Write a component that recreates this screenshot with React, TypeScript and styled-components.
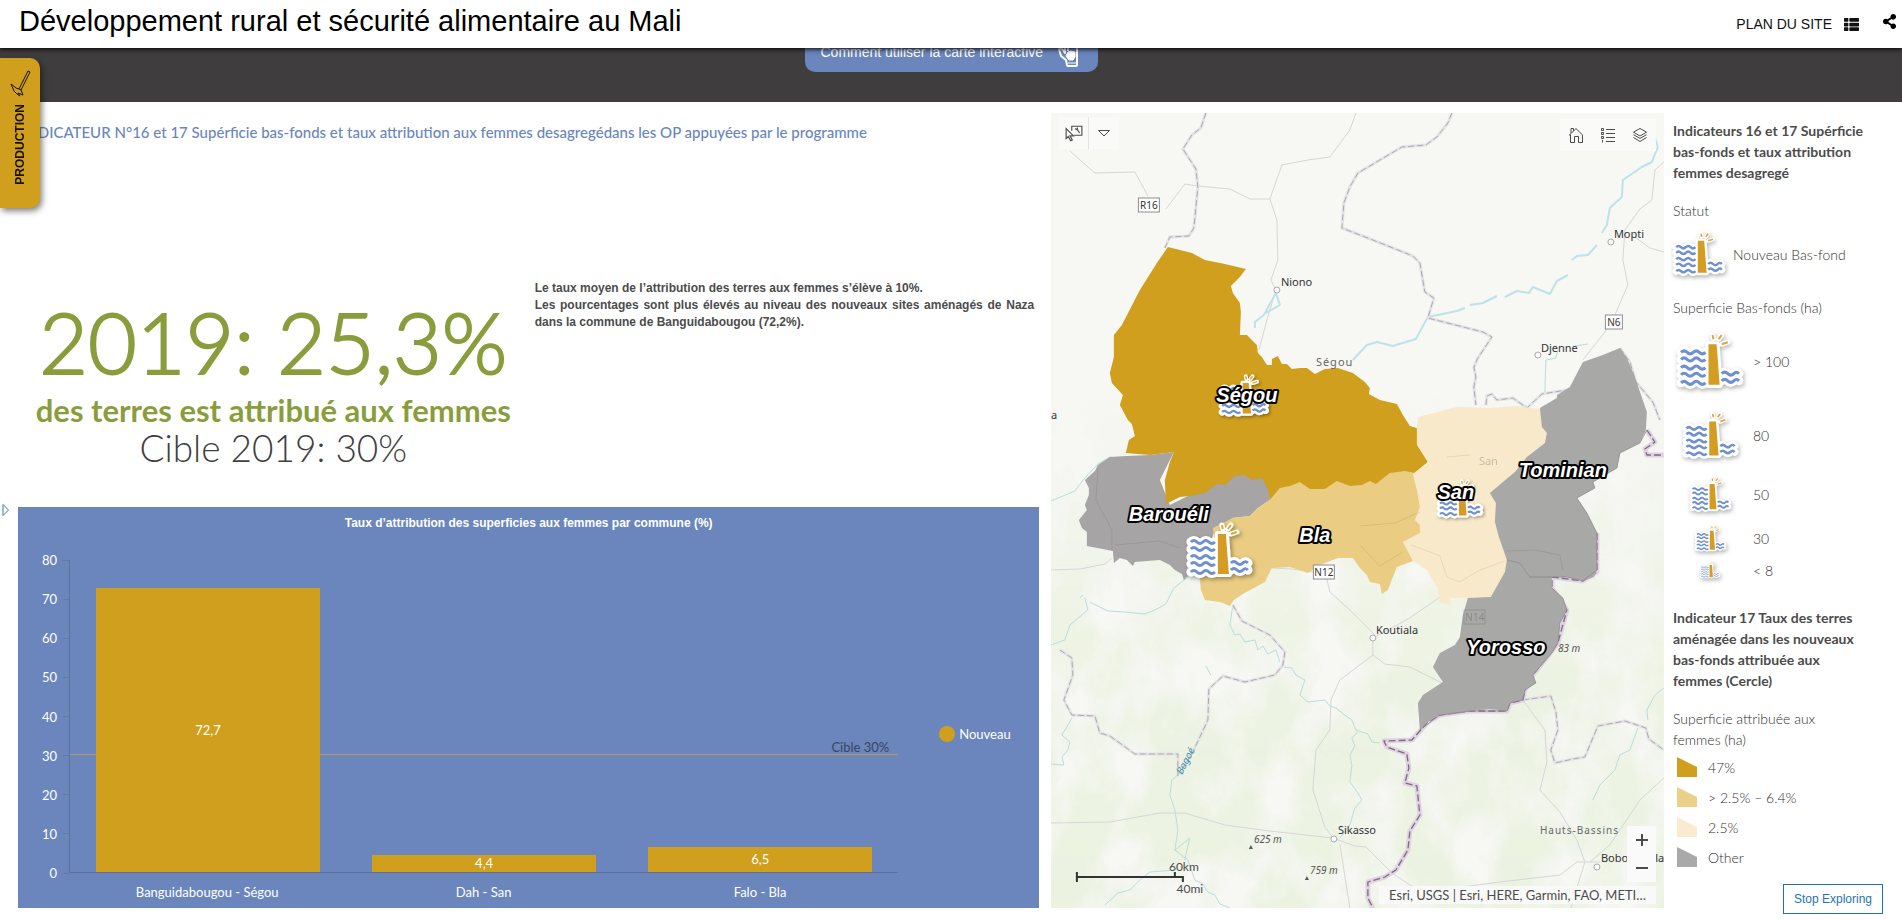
import React from 'react';
import styled, { createGlobalStyle } from 'styled-components';
import { FaThList, FaShareAlt } from 'react-icons/fa';

const GOLD = '#cf9f1d';
const BLUE = '#6a86bc';

const GlobalStyle = createGlobalStyle`
  *, *::before, *::after { box-sizing: border-box; }
  body { margin: 0; background: #fff; color: #4c4c4c; font-family: Lato, "Open Sans", sans-serif; font-size: 14px; }
  h1, h2, h3, p, ul, figure { margin: 0; padding: 0; }
  ul { list-style: none; }
  button { font: inherit; color: inherit; border: 0; padding: 0; background: none; cursor: pointer; }
`;

const Page = styled.div`
  display: flex;
  flex-direction: column;
  min-height: 100vh;
`;

const Header = styled.header`
  position: relative;
  z-index: 3;
  display: flex;
  align-items: center;
  height: 48px;
  padding: 0 5px 6px 19px;
  background: #fff;
  color: #000;
  font-family: "Liberation Sans", Arial, sans-serif;
  box-shadow: 0 1px 5px #000;
`;

const SiteTitle = styled.h1`
  flex: 1;
  font-size: 29px;
  font-weight: 400;
  line-height: 40px;
`;

const SiteMapLink = styled.a`
  display: flex;
  align-items: center;
  gap: 12px;
  margin: 6px 22px 0 0;
  color: #111;
  font-size: 14px;
  text-decoration: none;
`;

const IconButton = styled.button`
  display: grid;
  place-items: center;
  width: 16px;
  height: 32px;
`;

const Band = styled.div`
  display: flex;
  flex-direction: column;
  align-items: center;
  justify-content: flex-end;
  height: 54px;
  padding-bottom: 30px;
  overflow: hidden;
  background: #3f3d3d;
`;

const HelpLink = styled.a`
  display: flex;
  flex: none;
  align-items: center;
  justify-content: space-between;
  width: 293px;
  height: 40px;
  padding: 0 17px 0 16px;
  border-radius: 10px;
  background: ${BLUE};
  color: #fff;
  font: 14px "Liberation Sans", Arial, sans-serif;
  text-decoration: none;
`;

const SectionTab = styled.button`
  position: absolute;
  z-index: 4;
  top: 58px;
  left: 0;
  display: flex;
  flex-direction: column;
  align-items: center;
  gap: 7px;
  width: 40px;
  height: 150px;
  padding-top: 12px;
  border-radius: 0 10px 10px 0;
  background: ${GOLD};
  color: #1a0f00;
  box-shadow: 2px 3px 6px rgba(0, 0, 0, 0.5);
  font: bold 12px "Liberation Sans", Arial, sans-serif;
`;

const TabText = styled.span`
  writing-mode: vertical-rl;
  transform: rotate(180deg);
`;

const Main = styled.main`
  flex: 1;
  display: grid;
  grid-template-columns: minmax(0, 5fr) 12px minmax(0, 3fr) 238px;
  padding: 11px 0 11px 18px;
`;

const Story = styled.section`
  position: relative;
  display: grid;
  grid-template-rows: minmax(394px, auto) 1fr;
`;

const Intro = styled.div`
  display: flex;
  flex-direction: column;
`;

const IndicatorTitle = styled.h2`
  padding: 9px 0 0 4px;
  color: ${BLUE};
  font-size: 15px;
  font-weight: 500;
  line-height: 20px;
`;

const Facts = styled.div`
  display: grid;
  grid-template-columns: 1fr 1fr;
  padding-top: 138px;
`;

const Figures = styled.div`
  display: flex;
  flex-direction: column;
  align-items: center;
  padding-top: 12px;
`;

const BigFigure = styled.p`
  color: #8a9d3c;
  font-size: 84px;
  font-weight: 300;
  line-height: 100px;
  -webkit-text-stroke: 2px #8a9d3c;
`;

const FigureCaption = styled.p`
  color: #8a9d3c;
  font-size: 31px;
  font-weight: 700;
  line-height: 36px;
`;

const Target = styled.p`
  color: #404040;
  font-size: 37px;
  font-weight: 300;
  line-height: 40px;
`;

const Comment = styled.div`
  padding: 0 5px 0 6px;
  font: bold 12px/17px "Liberation Sans", Arial, sans-serif;
  text-align: justify;
`;

const ExpandButton = styled.button`
  position: absolute;
  top: 390px;
  left: -16px;
  line-height: 0;
`;

const ChartPanel = styled.figure`
  display: flex;
  flex-direction: column;
  background: ${BLUE};
  color: #fff;
  font-size: 13px;
`;

const ChartTitle = styled.figcaption`
  padding-top: 8px;
  font: bold 12px/16px "Liberation Sans", Arial, sans-serif;
  text-align: center;
`;

const ChartBody = styled.div`
  flex: 1;
  display: grid;
  grid-template-columns: 51px 1fr 141px;
  grid-template-rows: 1fr 35px;
  padding-top: 29px;
`;

const YAxis = styled.ul`
  display: flex;
  flex-direction: column;
  justify-content: space-between;
`;

const Tick = styled.li`
  display: flex;
  align-items: center;
  justify-content: flex-end;
  gap: 6px;
  height: 0;
  &::after {
    content: '';
    width: 6px;
    height: 1px;
    background: #6079a8;
  }
`;

const Plot = styled.div`
  position: relative;
  display: grid;
  grid-template-columns: repeat(3, 1fr);
  align-items: end;
  border: solid #5a71a0;
  border-width: 0 0 1px 1px;
`;

const Bar = styled.div`
  position: relative;
  display: grid;
  place-items: center;
  width: 81%;
  margin: 0 auto;
  background: ${GOLD};
`;

const Guide = styled.div`
  position: absolute;
  right: 0;
  bottom: 37.5%;
  left: 0;
  padding-right: 9px;
  border-bottom: 1px solid #b3995a;
  color: #3a4560;
  line-height: 14px;
  text-align: right;
`;

const Categories = styled.ul`
  grid-column: 2;
  display: grid;
  grid-template-columns: repeat(3, 1fr);
  padding-top: 11px;
  line-height: 16px;
  text-align: center;
`;

const SeriesLegend = styled.div`
  display: flex;
  align-items: center;
  gap: 4px;
  padding: 34px 0 0 41px;
`;

const Dot = styled.span`
  width: 16px;
  height: 16px;
  border-radius: 50%;
  background: ${GOLD};
`;

const MapBox = styled.section`
  position: relative;
  grid-column: 3;
  overflow: hidden;
  min-height: 480px;
  background: #f6f6f2;
`;

const MapCanvas = styled.svg`
  position: absolute;
  inset: 0;
  width: 100%;
  height: 100%;
`;

const MapTools = styled.div<{ $side: 'left' | 'right' }>`
  position: absolute;
  top: ${(p) => (p.$side === 'left' ? '4px' : '6px')};
  ${(p) => p.$side}: 8px;
  display: flex;
  background: rgba(250, 250, 250, 0.9);
`;

const MapTool = styled.button<{ $compact?: boolean; $divided?: boolean }>`
  display: grid;
  place-items: center;
  width: ${(p) => (p.$compact ? '30px' : '32px')};
  height: 32px;
  border-right: ${(p) => (p.$divided ? '1px solid #e2e2e2' : '0')};
`;

const ZoomTools = styled.div`
  position: absolute;
  right: 8px;
  bottom: 26px;
  display: flex;
  flex-direction: column;
  width: 29px;
  background: #fafafa;
`;

const ZoomButton = styled.button`
  display: grid;
  place-items: center;
  height: 28px;
  & > svg { stroke-width: 2; }
`;

const Attribution = styled.p`
  position: absolute;
  right: 8px;
  bottom: 4px;
  padding: 0 10px;
  background: rgba(250, 250, 250, 0.9);
  font-size: 13px;
  line-height: 18px;
`;

const Legend = styled.aside`
  padding: 7px 38px 0 9px;
  color: #303030;
  font-weight: 300;
  line-height: 21px;
`;

const LegendTitle = styled.h3`
  margin-bottom: 17px;
  color: #4c4c4c;
  font-size: 14px;
  font-weight: 700;
`;

const LegendLabel = styled.p`
  font-size: 14px;
`;

const SymbolRow = styled.div`
  display: flex;
  align-items: center;
  gap: 8px;
  height: 66px;
  margin-bottom: 10px;
`;

const SizeRow = styled.li<{ $height: number }>`
  display: grid;
  grid-template-columns: 74px 1fr;
  align-items: center;
  column-gap: 6px;
  height: ${(p) => p.$height}px;
  & > svg { justify-self: center; }
`;

const SizeList = styled.ul`
  margin: 3px 0 24px;
`;

const ClassList = styled.ul`
  padding: 2px 0 0 4px;
`;

const ClassRow = styled.li`
  display: flex;
  align-items: center;
  gap: 11px;
  height: 30px;
`;

const StopButton = styled.button`
  position: absolute;
  z-index: 2;
  right: 19px;
  bottom: 5px;
  width: 100px;
  height: 30px;
  border: 1px solid #1f74a8;
  background: #fff;
  color: #1f74a8;
  font: 12px "Liberation Sans", Arial, sans-serif;
`;

const Frame = styled.div`
  position: relative;
`;

const WAVE = 'c2 -2 4 -2 6 0 s4 2 6 0 s4 -2 6 0 s4 2 6 0';
const SHORT_WAVE = 'c2 -2 4 -2 6 0 s4 2 6 0 s3 -2 5 0';

const damWater = [20, 27, 35, 42, 50].map((y) => `M3 ${y}${WAVE}`).join('') + `M43 41${SHORT_WAVE}M43 48${SHORT_WAVE}`;
const damTower = 'M30 12h8l3 40H30z';
const damSplash = 'M35 7l-1-4M40 7l3-4M43 12l6-2';

function DamShapes() {
  return (
    <>
      <g fill="none" stroke="#fff" strokeLinecap="round" strokeLinejoin="round">
        <path d={damWater} strokeWidth="9" />
        <path d={damTower} strokeWidth="6" fill="#fff" />
        <path d={damSplash} strokeWidth="5" />
      </g>
      <path d={damWater} fill="none" stroke="#6e8fd0" strokeWidth="3" />
      <path d={damTower} fill="#d49c20" />
      <path d={damSplash} fill="none" stroke="#d9a838" strokeWidth="2" />
    </>
  );
}

const ShadowedSvg = styled.svg`
  flex: none;
  overflow: visible;
  filter: drop-shadow(1px 2px 2px rgba(0, 0, 0, 0.3));
`;

function DamIcon({ size }: { size: number }) {
  return (
    <ShadowedSvg width={size} height={size} viewBox="-1 -4 65 65" aria-hidden="true">
      <DamShapes />
    </ShadowedSvg>
  );
}

function HoeIcon() {
  return (
    <svg width="22" height="27" viewBox="0 0 22 27" fill="none" stroke="#1a0f00" aria-hidden="true">
      <path d="M19 1l2 1-9 18-2-1zM10 19l-3-1-5-4 3 7 3 3 3 2-2-3 5 2-2-5" strokeLinejoin="round" />
    </svg>
  );
}

function TouchIcon() {
  return (
    <svg width="24" height="32" viewBox="0 0 24 32" fill="none" stroke="#fff" strokeWidth="2" strokeLinejoin="round" aria-hidden="true">
      <path d="M4 12V2h16v27q0 1-1 1h-8q-1 0-1-1l-1-5-5-4-2-7q2-2 4 1l2 3V9h3v6" />
      <path d="M11 16l3-1 4 1v5l-2 3h-4l-3-4z" fill="#fff" strokeWidth="1" />
      <path d="M11 27h8" strokeWidth="1" />
    </svg>
  );
}

const bars = [
  { name: 'Banguidabougou - Ségou', value: 72.7, label: '72,7' },
  { name: 'Dah - San', value: 4.4, label: '4,4' },
  { name: 'Falo - Bla', value: 6.5, label: '6,5' },
];

const sizes = [
  { label: '> 100', size: 66, height: 80 },
  { label: '80', size: 55, height: 68 },
  { label: '50', size: 41, height: 50 },
  { label: '30', size: 31, height: 38 },
  { label: '< 8', size: 20, height: 26 },
];

const classes = [
  { label: '47%', color: GOLD },
  { label: '> 2.5% – 6.4%', color: '#ebd08a' },
  { label: '2.5%', color: '#f9ead0' },
  { label: 'Other', color: '#a9a9a9' },
];

const regions = [
  {
    color: '#a6a4a5',
    d: 'M1174 452L1150 455 1127 456 1110 457 1098 465 1095 471 1085 480 1089 488 1089 495 1085 505 1087 510 1079 520 1082 528 1087 532 1087 546 1113 551 1114 563 1120 558 1127 560 1133 566 1135 562 1160 560 1170 565 1175 570 1182 574 1184 580 1187 577 1200 570 1215 530 1233 518 1250 516 1258 508 1270 500 1268 470 1240 470 1170 505 1160 480z',
  },
  {
    color: '#eacd83',
    d: 'M1270 500L1258 508 1250 516 1233 518 1213 528 1215 545 1200 578 1201 590 1205 600 1220 602 1230 606 1234 600 1243 594 1265 582 1272 568 1290 567 1308 573 1320 565 1338 558 1353 558 1360 568 1367 575 1370 582 1380 584 1382 594 1388 590 1393 577 1397 567 1413 561 1425 535 1420 470 1380 465 1280 470z',
  },
  {
    color: GOLD,
    d: 'M1168 247L1192 253 1205 260 1225 264 1246 269 1240 277 1231 286 1233 293 1240 303 1241 312 1240 335 1247 335 1257 345 1258 353 1262 357 1267 365 1272 365 1272 359 1278 356 1282 364 1287 364 1292 369 1300 368 1307 368 1315 374 1325 369 1338 368 1353 373 1365 382 1370 388 1369 394 1380 400 1397 404 1403 415 1410 426 1417 428 1418 445 1428 462 1415 473 1405 471 1390 473 1376 484 1370 481 1362 485 1350 486 1337 481 1325 489 1310 489 1300 482 1290 486 1280 488 1270 500 1268 489 1262 478 1252 480 1245 475 1235 476 1225 485 1217 484 1205 493 1190 496 1180 497 1166 504 1165 480 1170 462 1174 452 1150 455 1126 453 1129 440 1135 436 1132 424 1128 420 1120 405 1123 395 1112 383 1110 373 1114 357 1114 335 1122 325 1140 290 1157 263z',
  },
  {
    color: '#f9e9cb',
    d: 'M1418 417L1457 407 1490 408 1517 406 1540 409 1542 427 1547 433 1545 443 1527 457 1515 472 1492 493 1496 503 1495 522 1499 537 1507 560 1505 572 1492 597 1468 598 1450 598 1451 605 1440 603 1438 588 1427 570 1413 561 1403 542 1420 533 1420 525 1415 520 1420 507 1417 490 1413 474 1428 462 1417 445 1417 427z',
  },
  {
    color: '#a8a8a7',
    d: 'M1540 408L1557 398 1557 395 1570 387 1583 362 1603 355 1620 348 1627 358 1635 377 1647 412 1646 430 1640 443 1620 453 1617 468 1593 482 1595 488 1577 498 1587 513 1597 533 1597 570 1594 577 1583 581 1567 577 1552 577 1530 577 1520 563 1507 560 1499 537 1495 522 1496 503 1490 493 1515 472 1527 457 1545 443 1547 433 1542 427z',
  },
  {
    color: '#a8a8a7',
    d: 'M1507 560L1520 563 1530 577 1540 575 1552 577 1552 588 1563 598 1567 610 1560 623 1558 643 1552 653 1533 675 1536 683 1525 690 1523 700 1510 703 1507 711 1490 709 1470 711 1455 714 1440 715 1428 722 1420 730 1418 703 1423 695 1443 682 1433 667 1440 653 1455 645 1460 637 1463 615 1468 598 1491 597 1505 572z',
  },
];

const borders =
  'M1206 113L1201 128 1192 135 1183 149 1196 169 1198 187 1194 228 1189 236 1170 237 1165 248' +
  'M1452 113L1448 123 1437 137 1426 145 1402 147 1358 173 1350 187 1344 203 1342 228 1373 240 1413 256 1420 263 1425 292 1434 298 1428 318 1483 332 1492 337 1478 358 1474 367 1476 377 1474 387 1476 405' +
  'M1486 405L1487 396 1492 394 1497 400 1513 398 1527 408 1542 394 1567 390M1620 348L1630 362 1636 382 1653 402 1660 420' +
  'M1233 605L1242 621 1270 635 1285 652 1283 665 1275 675 1245 682 1223 676 1209 689 1208 720 1193 752 1180 773M1178 776L1178 754 1135 754 1110 736 1100 733 1095 716 1072 715 1064 700 1073 675 1072 658 1060 650' +
  'M1523 700L1551 696 1556 712 1558 730 1551 750 1555 763 1573 759 1585 757 1598 726 1625 721 1646 728 1649 739 1664 750';
const frontier =
  'M1647 430L1655 442 1645 449 1647 455 1664 455M1597 533L1597 572 1583 581 1552 577 1552 588 1567 610 1558 643 1533 675 1525 690 1523 700 1510 703 1507 711 1470 711 1440 715 1428 722 1412 740 1384 741 1387 747 1407 754 1409 768 1405 783 1417 786 1420 815 1410 831 1408 850 1396 870 1385 877 1368 882 1368 898 1373 908';
const roads =
  'M1070 151L1095 173 1135 172 1148 196M1166 209L1185 184 1198 186 1230 189 1250 199 1270 199 1282 165 1308 160 1330 157 1350 130 1356 113M1270 199L1277 220 1278 260 1271 280 1276 290 1267 320 1259 350' +
  'M1664 162L1655 170 1652 200 1640 209 1625 230 1623 260 1628 285 1615 315 1605 332 1583 360M1664 252L1650 248 1635 237' +
  'M1051 570L1080 569 1105 564 1112 558M1272 568L1292 569 1314 572M1327 579L1330 592 1350 610 1375 635M1440 597L1410 618 1373 638 1373 655 1340 680 1331 700 1330 730 1316 750 1313 790 1325 827 1333 838 1270 831 1225 825 1185 813 1160 813 1110 822 1051 823' +
  'M1373 655L1385 664 1410 667 1442 683M1333 838L1355 846 1366 847 1392 873 1410 885 1425 892 1500 882 1560 875 1577 862 1600 862M1340 844L1350 908M1523 700L1545 730 1547 762 1540 790 1560 812 1577 840 1585 862 1580 878 1571 908M1590 862L1610 845 1640 800 1664 778';
const streams =
  'M1051 501L1075 491 1084 479 1098 464 1110 457 1127 460M1080 598L1083 595M1090 602L1108 611 1125 612 1145 614 1157 609 1166 604 1174 588 1184 580 1200 570' +
  'M1085 598L1088 610 1070 625 1065 640 1051 645M1233 605L1230 625 1235 635 1240 634 1245 642 1255 640 1258 650 1263 646 1268 654 1276 650 1280 662M1284 667L1292 668 1296 675 1305 680 1300 695 1308 702 1325 700 1330 706 1336 708 1345 715 1352 720 1356 730 1368 734 1372 742 1380 743M1358 732L1352 738 1355 746 1350 755 1352 765 1350 782 1356 790 1362 800 1355 808 1350 825 1340 838' +
  'M1180 773L1172 780 1170 795 1175 810 1178 830 1175 850 1188 860 1195 880 1203 884 1208 892 1215 895 1220 904 1230 908M1175 850L1190 838 1187 850 1185 860M1175 870L1150 872 1140 880 1130 890 1118 893 1105 905M1072 718L1068 725 1062 735 1070 742 1068 750 1062 757 1064 765 1051 764' +
  'M1638 728L1630 750 1620 755 1615 770 1600 785 1593 800M1648 720L1647 710 1655 695 1664 688M1206 666L1211 675M1545 392L1546 360 1556 358 1558 350M1575 346L1588 344';
const river =
  'M1655 138L1658 147 1652 162 1642 167 1623 180 1622 197 1610 208 1607 225 1602 233M1597 245L1588 255 1577 256 1572 260M1568 275L1557 281 1550 294 1533 287 1529 293 1517 291 1505 297M1497 296L1483 303 1470 305M1465 308L1457 311 1428 317 1416 339 1393 346 1377 342 1367 345 1353 360M1276 293L1264 315 1255 322 1255 328M1276 293L1280 305 1266 313';

const cities = [
  { name: 'Niono', x: 1281, y: 286, cx: 1277, cy: 290 },
  { name: 'Mopti', x: 1614, y: 238, cx: 1611, cy: 242 },
  { name: 'Djenne', x: 1541, y: 352, cx: 1538, cy: 355 },
  { name: 'Koutiala', x: 1376, y: 634, cx: 1373, cy: 638 },
  { name: 'Sikasso', x: 1338, y: 834, cx: 1334, cy: 839 },
  { name: 'Bobo Dioulasso', x: 1601, y: 862, cx: 1597, cy: 867 },
];

const routes = [
  { name: 'R16', x: 1149, y: 205, w: 21 },
  { name: 'N6', x: 1614, y: 322, w: 17 },
  { name: 'N12', x: 1324, y: 572, w: 21 },
];

const names = [
  { name: 'Ségou', x: 1247, y: 402 },
  { name: 'Barouéli', x: 1169, y: 521 },
  { name: 'Bla', x: 1315, y: 542 },
  { name: 'San', x: 1456, y: 499 },
  { name: 'Tominian', x: 1563, y: 477 },
  { name: 'Yorosso', x: 1506, y: 654 },
];

const dams = [
  { x: 1188, y: 522, k: 1 },
  { x: 1220, y: 374, k: 0.76 },
  { x: 1438, y: 479, k: 0.7 },
];

function InteractiveMap() {
  return (
    <MapCanvas viewBox="1051 113 613 795" preserveAspectRatio="xMidYMid slice" role="img" aria-label="Carte des cercles">
      <defs>
        <linearGradient id="fade" x1="0" y1="0" x2="0" y2="1">
          <stop offset="0.35" stopColor="#000" />
          <stop offset="0.65" stopColor="#ccc" />
          <stop offset="1" stopColor="#fff" />
        </linearGradient>
        <mask id="south">
          <rect x="1051" y="113" width="613" height="795" fill="url(#fade)" />
        </mask>
        <filter id="vegetation" x="0" y="0" width="1" height="1" colorInterpolationFilters="sRGB">
          <feTurbulence type="fractalNoise" baseFrequency="0.02 0.014" numOctaves="4" seed="8" />
          <feColorMatrix values="0 0 0 0 0.92  0 0 0 0 0.95  0 0 0 0 0.88  0 3.5 0 0 -1.1" />
        </filter>
        <filter id="iconShadow" x="-0.2" y="-0.2" width="1.5" height="1.5">
          <feDropShadow dx="2" dy="2" stdDeviation="2" floodOpacity="0.35" />
        </filter>
      </defs>
      <rect x="1051" y="113" width="613" height="795" fill="#f7f7f4" />
      <g mask="url(#south)">
        <rect x="1051" y="113" width="613" height="795" filter="url(#vegetation)" />
      </g>
      <g fill="none" strokeLinejoin="round">
        <path d={roads} stroke="#d6d6d6" />
        <path d={streams} stroke="#b9dcdc" />
        <path d={river} stroke="#bce2ea" strokeWidth="2" />
        <path d={borders} stroke="#e4e2e5" strokeWidth="3" />
        <path d={borders} stroke="#aeaaad" strokeDasharray="6 3" />
        <path d={frontier} stroke="#e2d2e4" strokeWidth="5" />
        <path d={frontier} stroke="#776d7c" strokeWidth="1.3" strokeDasharray="7 3" />
      </g>
      {regions.map((r) => (
        <path key={r.d} d={r.d} fill={r.color} />
      ))}
      <g fill="none" stroke="#000" strokeOpacity="0.08">
        <path d="M1507 551L1535 550 1560 555 1563 570M1411 545L1425 550 1440 556 1447 577 1460 582 1480 570 1505 561M1360 526L1395 523 1420 512M1360 545L1380 566 1403 552M1447 457L1470 455M1098 470L1096 500 1112 530 1112 551M1115 545L1160 541 1180 548" />
      </g>
      <g fill="none" stroke="#85818a" strokeOpacity="0.7">
        <path d="M1647 430L1640 443 1620 453 1617 468 1593 482 1595 488 1577 498 1587 513 1597 533 1597 570 1583 581 1567 577 1552 577 1530 577 1520 563 1507 560" />
        <path d="M1552 588L1563 598 1567 610 1560 623 1558 643 1552 653 1533 675 1536 683 1525 690 1523 700 1510 703 1507 711 1470 711 1440 715 1420 730" />
      </g>
      <g fontFamily='"Noto Sans", sans-serif' fontSize="11" fill="#333">
        {cities.map((c) => (
          <g key={c.name}>
            <circle cx={c.cx} cy={c.cy} r="3" fill="#fff" stroke="#aaa" />
            <text x={c.x} y={c.y}>{c.name}</text>
          </g>
        ))}
        {routes.map((r) => (
          <g key={r.name}>
            <rect x={r.x - r.w / 2} y={r.y - 7} width={r.w} height="14" fill="#fff" stroke="#8e8e8e" />
            <text x={r.x} y={r.y + 4} fontSize="10" textAnchor="middle">{r.name}</text>
          </g>
        ))}
        <g opacity="0.25">
          <rect x="1464" y="610" width="21" height="14" fill="none" stroke="#555" />
          <text x="1475" y="621" fontSize="10" textAnchor="middle">N14</text>
          <text x="1479" y="465">San</text>
        </g>
        <text x="1051" y="419">a</text>
        <g fill="#666">
          <text x="1316" y="366" letterSpacing="1">Ségou</text>
          <text x="1540" y="834" fontSize="10" letterSpacing="1">Hauts-Bassins</text>
        </g>
        <g fill="#555" fontSize="10" fontStyle="italic">
          <text x="1558" y="652">83 m</text>
          <text x="1254" y="843">625 m</text>
          <text x="1310" y="874">759 m</text>
          <path d="M1249 849l2-4 2 4zM1305 880l2-4 2 4z" />
          <text transform="translate(1182 775) rotate(-62)" fill="#3d8fab">Bagoé</text>
        </g>
      </g>
      {dams.map((d) => (
        <g key={d.x} transform={`translate(${d.x} ${d.y}) scale(${d.k})`} filter="url(#iconShadow)">
          <DamShapes />
        </g>
      ))}
      <g
        fontFamily='"Liberation Sans", Arial, sans-serif'
        fontSize="20"
        fontWeight="bold"
        fontStyle="italic"
        fill="#fff"
        stroke="#000"
        strokeWidth="4"
        strokeLinejoin="round"
        paintOrder="stroke"
        textAnchor="middle"
      >
        {names.map((n) => (
          <text key={n.name} x={n.x} y={n.y}>{n.name}</text>
        ))}
      </g>
      <path d="M1077 872v10M1077 877h106v5M1175 877v-5" fill="none" stroke="#333" strokeWidth="2" />
      <g fontFamily="Lato, sans-serif" fontSize="12" fill="#4c4c4c" textAnchor="middle">
        <text x="1184" y="871">60km</text>
        <text x="1190" y="893">40mi</text>
      </g>
    </MapCanvas>
  );
}

function ToolIcon({ d, size = 16 }: { d: string; size?: number }) {
  return (
    <svg width={size} height={size} viewBox="0 0 16 16" fill="none" stroke="#4c4c4c" aria-hidden="true">
      <path d={d} />
    </svg>
  );
}

export default function App() {
  return (
    <Frame>
      <GlobalStyle />
      <Page>
        <Header>
          <SiteTitle>Développement rural et sécurité alimentaire au Mali</SiteTitle>
          <SiteMapLink href="#plan">
            PLAN DU SITE <FaThList size={15} />
          </SiteMapLink>
          <IconButton aria-label="Partager">
            <FaShareAlt size={15} />
          </IconButton>
        </Header>
        <Band>
          <HelpLink href="#aide">
            Comment utiliser la carte interactive
            <TouchIcon />
          </HelpLink>
        </Band>
        <SectionTab>
          <HoeIcon />
          <TabText>PRODUCTION</TabText>
        </SectionTab>
        <Main>
          <Story>
            <Intro>
              <IndicatorTitle>
                INDICATEUR N°16 et 17 Supérficie bas-fonds et taux attribution aux femmes desagregédans les OP appuyées par le programme
              </IndicatorTitle>
              <Facts>
                <Figures>
                  <BigFigure>2019: 25,3%</BigFigure>
                  <FigureCaption>des terres est attribué aux femmes</FigureCaption>
                  <Target>Cible 2019: 30%</Target>
                </Figures>
                <Comment>
                  <p>Le taux moyen de l’attribution des terres aux femmes s’élève à 10%.</p>
                  <p>
                    Les pourcentages sont plus élevés au niveau des nouveaux sites aménagés de Naza dans la commune de
                    Banguidabougou (72,2%).
                  </p>
                </Comment>
              </Facts>
            </Intro>
            <ExpandButton aria-label="Ouvrir le panneau">
              <svg width="8" height="14" viewBox="0 0 8 14" fill="#fff" stroke="#2f7f9c">
                <path d="M1 1.500L6.500 7 1 12.500z" />
              </svg>
            </ExpandButton>
            <ChartPanel>
              <ChartTitle>Taux d’attribution des superficies aux femmes par commune (%)</ChartTitle>
              <ChartBody>
                <YAxis>
                  {[80, 70, 60, 50, 40, 30, 20, 10, 0].map((v) => (
                    <Tick key={v}>{v}</Tick>
                  ))}
                </YAxis>
                <Plot>
                  <Guide>Cible 30%</Guide>
                  {bars.map((b) => (
                    <Bar key={b.name} style={{ height: `${b.value / 0.8}%` }}>{b.label}</Bar>
                  ))}
                </Plot>
                <SeriesLegend>
                  <Dot />
                  Nouveau
                </SeriesLegend>
                <Categories>
                  {bars.map((b) => (
                    <li key={b.name}>{b.name}</li>
                  ))}
                </Categories>
              </ChartBody>
            </ChartPanel>
          </Story>
          <MapBox>
            <InteractiveMap />
            <MapTools $side="left">
              <MapTool $compact $divided aria-label="Sélectionner">
                <ToolIcon size={18} d="M1 4v9l2-2 2 4 1.500-.7-2-3.800h3zM6 6V2h9v8H8M11 3v2l2 3M9 4l3 2" />
              </MapTool>
              <MapTool $compact aria-label="Options de sélection">
                <ToolIcon d="M2.500 5.500h11L8 11z" />
              </MapTool>
            </MapTools>
            <MapTools $side="right">
              <MapTool aria-label="Accueil">
                <ToolIcon d="M1.500 8L8 1.500 14.500 8v7.500h-4v-6h-4v6h-4V8H1M3 6V1.500h2.500V4" />
              </MapTool>
              <MapTool aria-label="Légende">
                <ToolIcon d="M6 2.500h9M6 6.500h9M6 10.500h9M6 14.500h9M1.500 1.500h2v2h-2zM1.500 5.500h2v2h-2zM1.500 9.500h2v2h-2zM2.500 13v2.500" />
              </MapTool>
              <MapTool aria-label="Couches">
                <ToolIcon d="M8 1.500l6.500 3.700L8 9 1.500 5.200zM1.500 7.700L8 11.500l6.500-3.800M1.500 10.500L8 14.500l6.500-4" />
              </MapTool>
            </MapTools>
            <ZoomTools>
              <ZoomButton aria-label="Zoom avant">
                <ToolIcon d="M8 2v12M2 8h12" />
              </ZoomButton>
              <ZoomButton aria-label="Zoom arrière">
                <ToolIcon d="M2 8h12" />
              </ZoomButton>
            </ZoomTools>
            <Attribution>Esri, USGS | Esri, HERE, Garmin, FAO, METI…</Attribution>
          </MapBox>
          <Legend>
            <LegendTitle>Indicateurs 16 et 17 Supérficie bas-fonds et taux attribution femmes desagregé</LegendTitle>
            <LegendLabel>Statut</LegendLabel>
            <SymbolRow>
              <DamIcon size={52} />
              Nouveau Bas-fond
            </SymbolRow>
            <LegendLabel>Superficie Bas-fonds (ha)</LegendLabel>
            <SizeList>
              {sizes.map((s) => (
                <SizeRow key={s.label} $height={s.height}>
                  <DamIcon size={s.size} />
                  {s.label}
                </SizeRow>
              ))}
            </SizeList>
            <LegendTitle>Indicateur 17 Taux des terres aménagée dans les nouveaux bas-fonds attribuée aux femmes (Cercle)</LegendTitle>
            <LegendLabel>Superficie attribuée aux femmes (ha)</LegendLabel>
            <ClassList>
              {classes.map((c) => (
                <ClassRow key={c.label}>
                  <svg width="20" height="20" viewBox="0 0 20 20" aria-hidden="true">
                    <path d="M0 0l20 10v10H0z" fill={c.color} />
                  </svg>
                  {c.label}
                </ClassRow>
              ))}
            </ClassList>
          </Legend>
        </Main>
      </Page>
      <StopButton>Stop Exploring</StopButton>
    </Frame>
  );
}
